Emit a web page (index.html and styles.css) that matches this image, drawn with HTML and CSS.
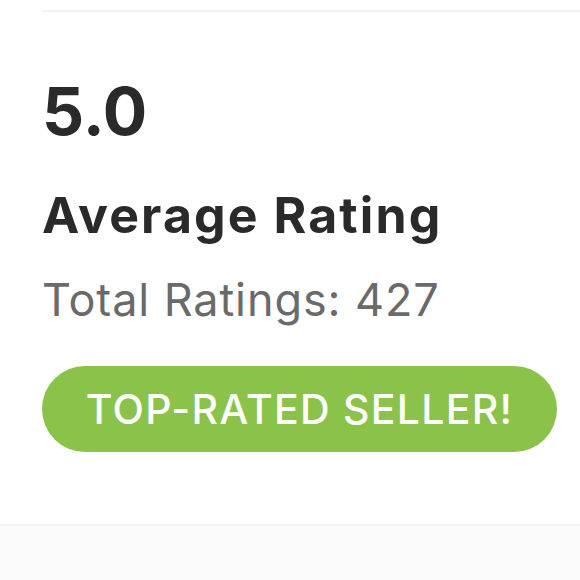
FILE: index.html
```html
<!DOCTYPE html>
<html lang="en">
<head>
<meta charset="utf-8">
<title>Rating</title>
<link rel="stylesheet" href="styles.css">
</head>
<body>
<div class="page">
  <section class="card">
    <div class="divider"></div>
    <div class="rating">
      <div class="score">5.0</div>
      <div class="label">Average Rating</div>
      <div class="total">Total Ratings: 427</div>
      <div class="badge">TOP-RATED SELLER!</div>
    </div>
  </section>
  <section class="footer"></section>
</div>
</body>
</html>
```
FILE: styles.css
```css
html, body {
  margin: 0;
  padding: 0;
  background: #ffffff;
}
.page {
  width: 580px;
  height: 580px;
  overflow: hidden;
  display: flex;
  flex-direction: column;
  font-family: Inter, "Open Sans", sans-serif;
}
.card {
  background: #ffffff;
  padding-top: 10px;
  height: 524px;
  flex-shrink: 0;
  box-sizing: border-box;
}
.divider {
  margin-left: 42px;
  height: 2px;
  background: #f3f0f0;
}
.rating {
  display: flex;
  flex-direction: column;
  align-items: flex-start;
  padding-left: 42px;
  padding-right: 23px;
}
.score {
  margin-top: 66px;
  font-size: 66px;
  line-height: 1;
  font-weight: 700;
  color: #2a2a2a;
}
.label {
  margin-top: 46px;
  font-size: 50px;
  line-height: 1;
  font-weight: 700;
  letter-spacing: 2.1px;
  color: #2a2a2a;
}
.total {
  margin-top: 37px;
  font-size: 45px;
  line-height: 1;
  font-weight: 400;
  letter-spacing: 0.9px;
  color: #6a6a6a;
}
.badge {
  margin-top: 44px;
  align-self: stretch;
  height: 86px;
  border-radius: 43px;
  background: #8bc34a;
  color: #ffffff;
  font-size: 41px;
  font-weight: 500;
  letter-spacing: 1.25px;
  display: flex;
  align-items: center;
  justify-content: center;
}
.footer {
  flex: 1;
  background: #fbfafa;
  border-top: 2px solid #f4f2f2;
}
```
